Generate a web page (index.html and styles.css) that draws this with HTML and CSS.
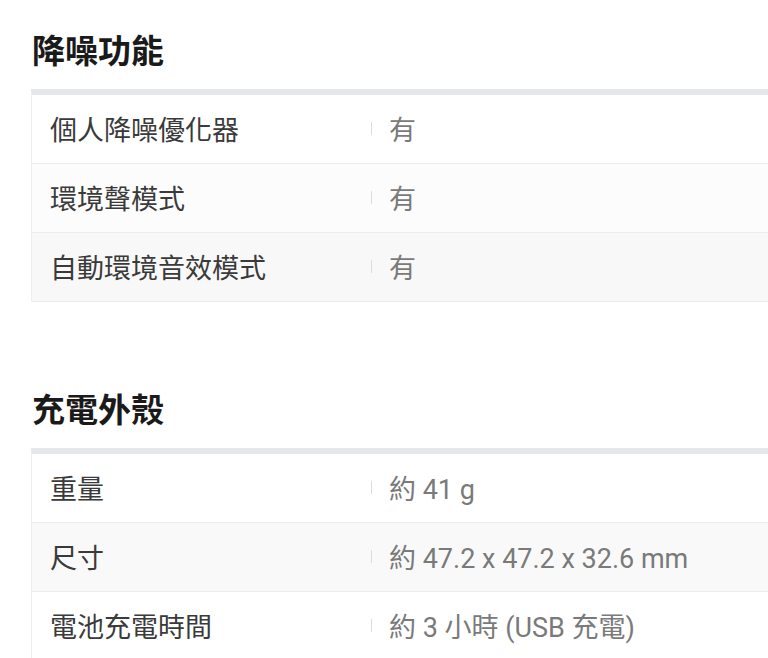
FILE: index.html
```html
<!DOCTYPE html>
<html lang="zh-Hant">
<head>
<meta charset="utf-8">
<link rel="stylesheet" href="styles.css">
</head>
<body>
<section class="spec">
  <h2 class="spec-title">降噪功能</h2>
  <div class="spec-table">
    <div class="spec-row row-a"><div class="spec-label">個人降噪優化器</div><div class="spec-value"><span class="sep"></span>有</div></div>
    <div class="spec-row row-b"><div class="spec-label">環境聲模式</div><div class="spec-value"><span class="sep"></span>有</div></div>
    <div class="spec-row row-c"><div class="spec-label">自動環境音效模式</div><div class="spec-value"><span class="sep"></span>有</div></div>
  </div>
</section>
<section class="spec second">
  <h2 class="spec-title">充電外殼</h2>
  <div class="spec-table">
    <div class="spec-row row-a"><div class="spec-label">重量</div><div class="spec-value"><span class="sep"></span>約 41 g</div></div>
    <div class="spec-row row-d"><div class="spec-label">尺寸</div><div class="spec-value"><span class="sep"></span>約 47.2 x 47.2 x 32.6 mm</div></div>
    <div class="spec-row row-a"><div class="spec-label">電池充電時間</div><div class="spec-value"><span class="sep"></span>約 3 小時 (USB 充電)</div></div>
  </div>
</section>
</body>
</html>
```
FILE: styles.css
```css
html, body {
  margin: 0;
  padding: 0;
  background: #fff;
  overflow: hidden;
}
body {
  padding: 28px 0 0 31px;
  font-family: Roboto, "Noto Sans CJK TC", sans-serif;
}
.spec-title {
  margin: 0 0 19px 1px;
  font-family: "Noto Sans CJK TC", sans-serif;
  font-size: 33px;
  line-height: 42px;
  font-weight: 700;
  color: #1a1a1a;
}
.second {
  margin-top: 85px;
}
.spec-table {
  border-top: 6px solid #e6e7eb;
  border-left: 1px solid #efefef;
}
.spec-row {
  display: grid;
  grid-template-columns: 339px 1fr;
  align-items: center;
  height: 69px;
  padding-bottom: 2px;
  box-sizing: border-box;
  border-bottom: 1px solid #ececec;
}
.row-a { background: #fff; }
.row-b { background: #fcfcfc; }
.row-c { background: #f8f8f8; }
.row-d { background: #f9f9f9; }
.spec-label {
  padding-left: 18px;
  font-family: "Noto Sans CJK TC", sans-serif;
  font-size: 27px;
  color: #3a3a3a;
}
.spec-value {
  display: flex;
  align-items: center;
  font-size: 27px;
  color: #7a7a7a;
}
.sep {
  width: 1px;
  height: 13px;
  background: #dcdcdc;
  margin-right: 17px;
}
```
